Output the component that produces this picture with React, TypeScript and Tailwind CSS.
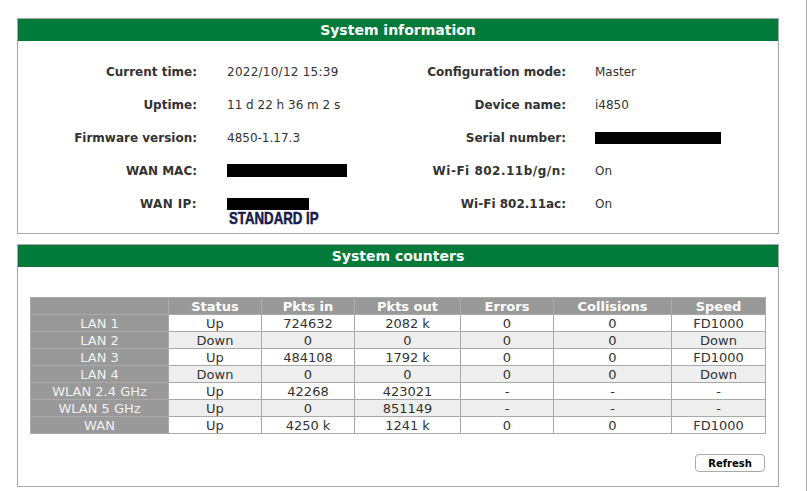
const rows = [
  ["LAN 1", "Up", "724632", "2082 k", "0", "0", "FD1000"],
  ["LAN 2", "Down", "0", "0", "0", "0", "Down"],
  ["LAN 3", "Up", "484108", "1792 k", "0", "0", "FD1000"],
  ["LAN 4", "Down", "0", "0", "0", "0", "Down"],
  ["WLAN 2.4 GHz", "Up", "42268", "423021", "-", "-", "-"],
  ["WLAN 5 GHz", "Up", "0", "851149", "-", "-", "-"],
  ["WAN", "Up", "4250 k", "1241 k", "0", "0", "FD1000"],
];

const headers = ["", "Status", "Pkts in", "Pkts out", "Errors", "Collisions", "Speed"];
const widths = ["w-[138px]", "w-[93px]", "w-[93px]", "w-[106px]", "w-[93px]", "w-[118px]", "w-[94px]"];

const leftInfo: [string, string | null][] = [
  ["Current time:", "2022/10/12 15:39"],
  ["Uptime:", "11 d 22 h 36 m 2 s"],
  ["Firmware version:", "4850-1.17.3"],
  ["WAN MAC:", null],
  ["WAN IP:", null],
];

const rightInfo: [string, string | null][] = [
  ["Configuration mode:", "Master"],
  ["Device name:", "i4850"],
  ["Serial number:", null],
  ["Wi-Fi 802.11b/g/n:", "On"],
  ["Wi-Fi 802.11ac:", "On"],
];

function PanelHeader({ title }: { title: string }) {
  return (
    <div className="h-[22px] bg-[#027a3a] text-center text-[14px] leading-[22px] font-bold text-white">
      {title}
    </div>
  );
}

function Redacted({ className }: { className: string }) {
  return <div className={`bg-black ${className}`} />;
}

function leftValue(label: string, value: string | null) {
  if (label === "WAN MAC:") return <Redacted className="h-[13px] w-[120px]" />;
  if (label === "WAN IP:") {
    return (
      <div className="relative">
        <Redacted className="h-[12px] w-[82px]" />
        <div className="absolute top-[12px] left-[2px] origin-left scale-x-[0.78] font-['Liberation_Sans'] text-[17px] leading-[17px] font-bold whitespace-nowrap text-[#1a1a4a] [-webkit-text-stroke:0.5px_#1a1a4a]">
          STANDARD IP
        </div>
      </div>
    );
  }
  return value;
}

export default function App() {
  return (
    <div className="h-[491px] w-[807px] overflow-hidden border-r border-[#a8a8a8] bg-white pt-[18px] pl-[17px] font-['DejaVu_Sans','Liberation_Sans',sans-serif] text-[12px] text-[#333]">
      <div className="h-[216px] w-[762px] border border-[#a8a8a8]">
        <PanelHeader title="System information" />
        <div className="flex pt-[14px]">
          <div className="w-[369px]">
            {leftInfo.map(([label, value]) => (
              <div key={label} className="flex h-[33px] items-center">
                <div className={`w-[179px] text-right font-bold ${label === "WAN IP:" ? "tracking-[0.4px]" : ""}`}>
                  {label}
                </div>
                <div className={`ml-[30px] flex-1 ${label === "Current time:" ? "tracking-[0.25px]" : ""}`}>
                  {leftValue(label, value)}
                </div>
              </div>
            ))}
          </div>
          <div className="flex-1">
            {rightInfo.map(([label, value]) => (
              <div key={label} className="flex h-[33px] items-center">
                <div
                  className={`w-[179px] text-right font-bold ${label === "Wi-Fi 802.11b/g/n:" ? "tracking-[0.5px]" : ""}`}
                >
                  {label}
                </div>
                <div className="ml-[29px] flex-1">
                  {value ?? <Redacted className="h-[12px] w-[126px]" />}
                </div>
              </div>
            ))}
          </div>
        </div>
      </div>

      <div className="mt-[10px] h-[243px] w-[762px] border border-[#a8a8a8]">
        <PanelHeader title="System counters" />
        <div className="pt-[30px] pl-[12px]">
          <table className="w-[735px] table-fixed border-collapse text-center text-[13px] leading-[15px]">
            <thead>
              <tr className="h-[17px] bg-[#999] font-bold text-white">
                {headers.map((h, i) => (
                  <th key={i} className={`border border-[#aaa] p-0 pt-px font-bold ${widths[i]}`}>
                    {h}
                  </th>
                ))}
              </tr>
            </thead>
            <tbody>
              {rows.map((row, r) => (
                <tr key={row[0]} className={`h-[17px] ${r % 2 === 1 ? "bg-[#eee]" : "bg-white"}`}>
                  {row.map((cell, c) => (
                    <td
                      key={c}
                      className={`border border-[#aaa] p-0 pt-px ${c === 0 ? "bg-[#999] text-[#f2f2f2]" : ""}`}
                    >
                      {cell}
                    </td>
                  ))}
                </tr>
              ))}
            </tbody>
          </table>
          <div className="flex justify-end pt-[20px] pr-[13px]">
            <button className="h-[18px] w-[70px] rounded-[4px] border border-[#aaa] bg-white text-[10px] leading-[15px] font-bold text-black">
              Refresh
            </button>
          </div>
        </div>
      </div>
    </div>
  );
}
